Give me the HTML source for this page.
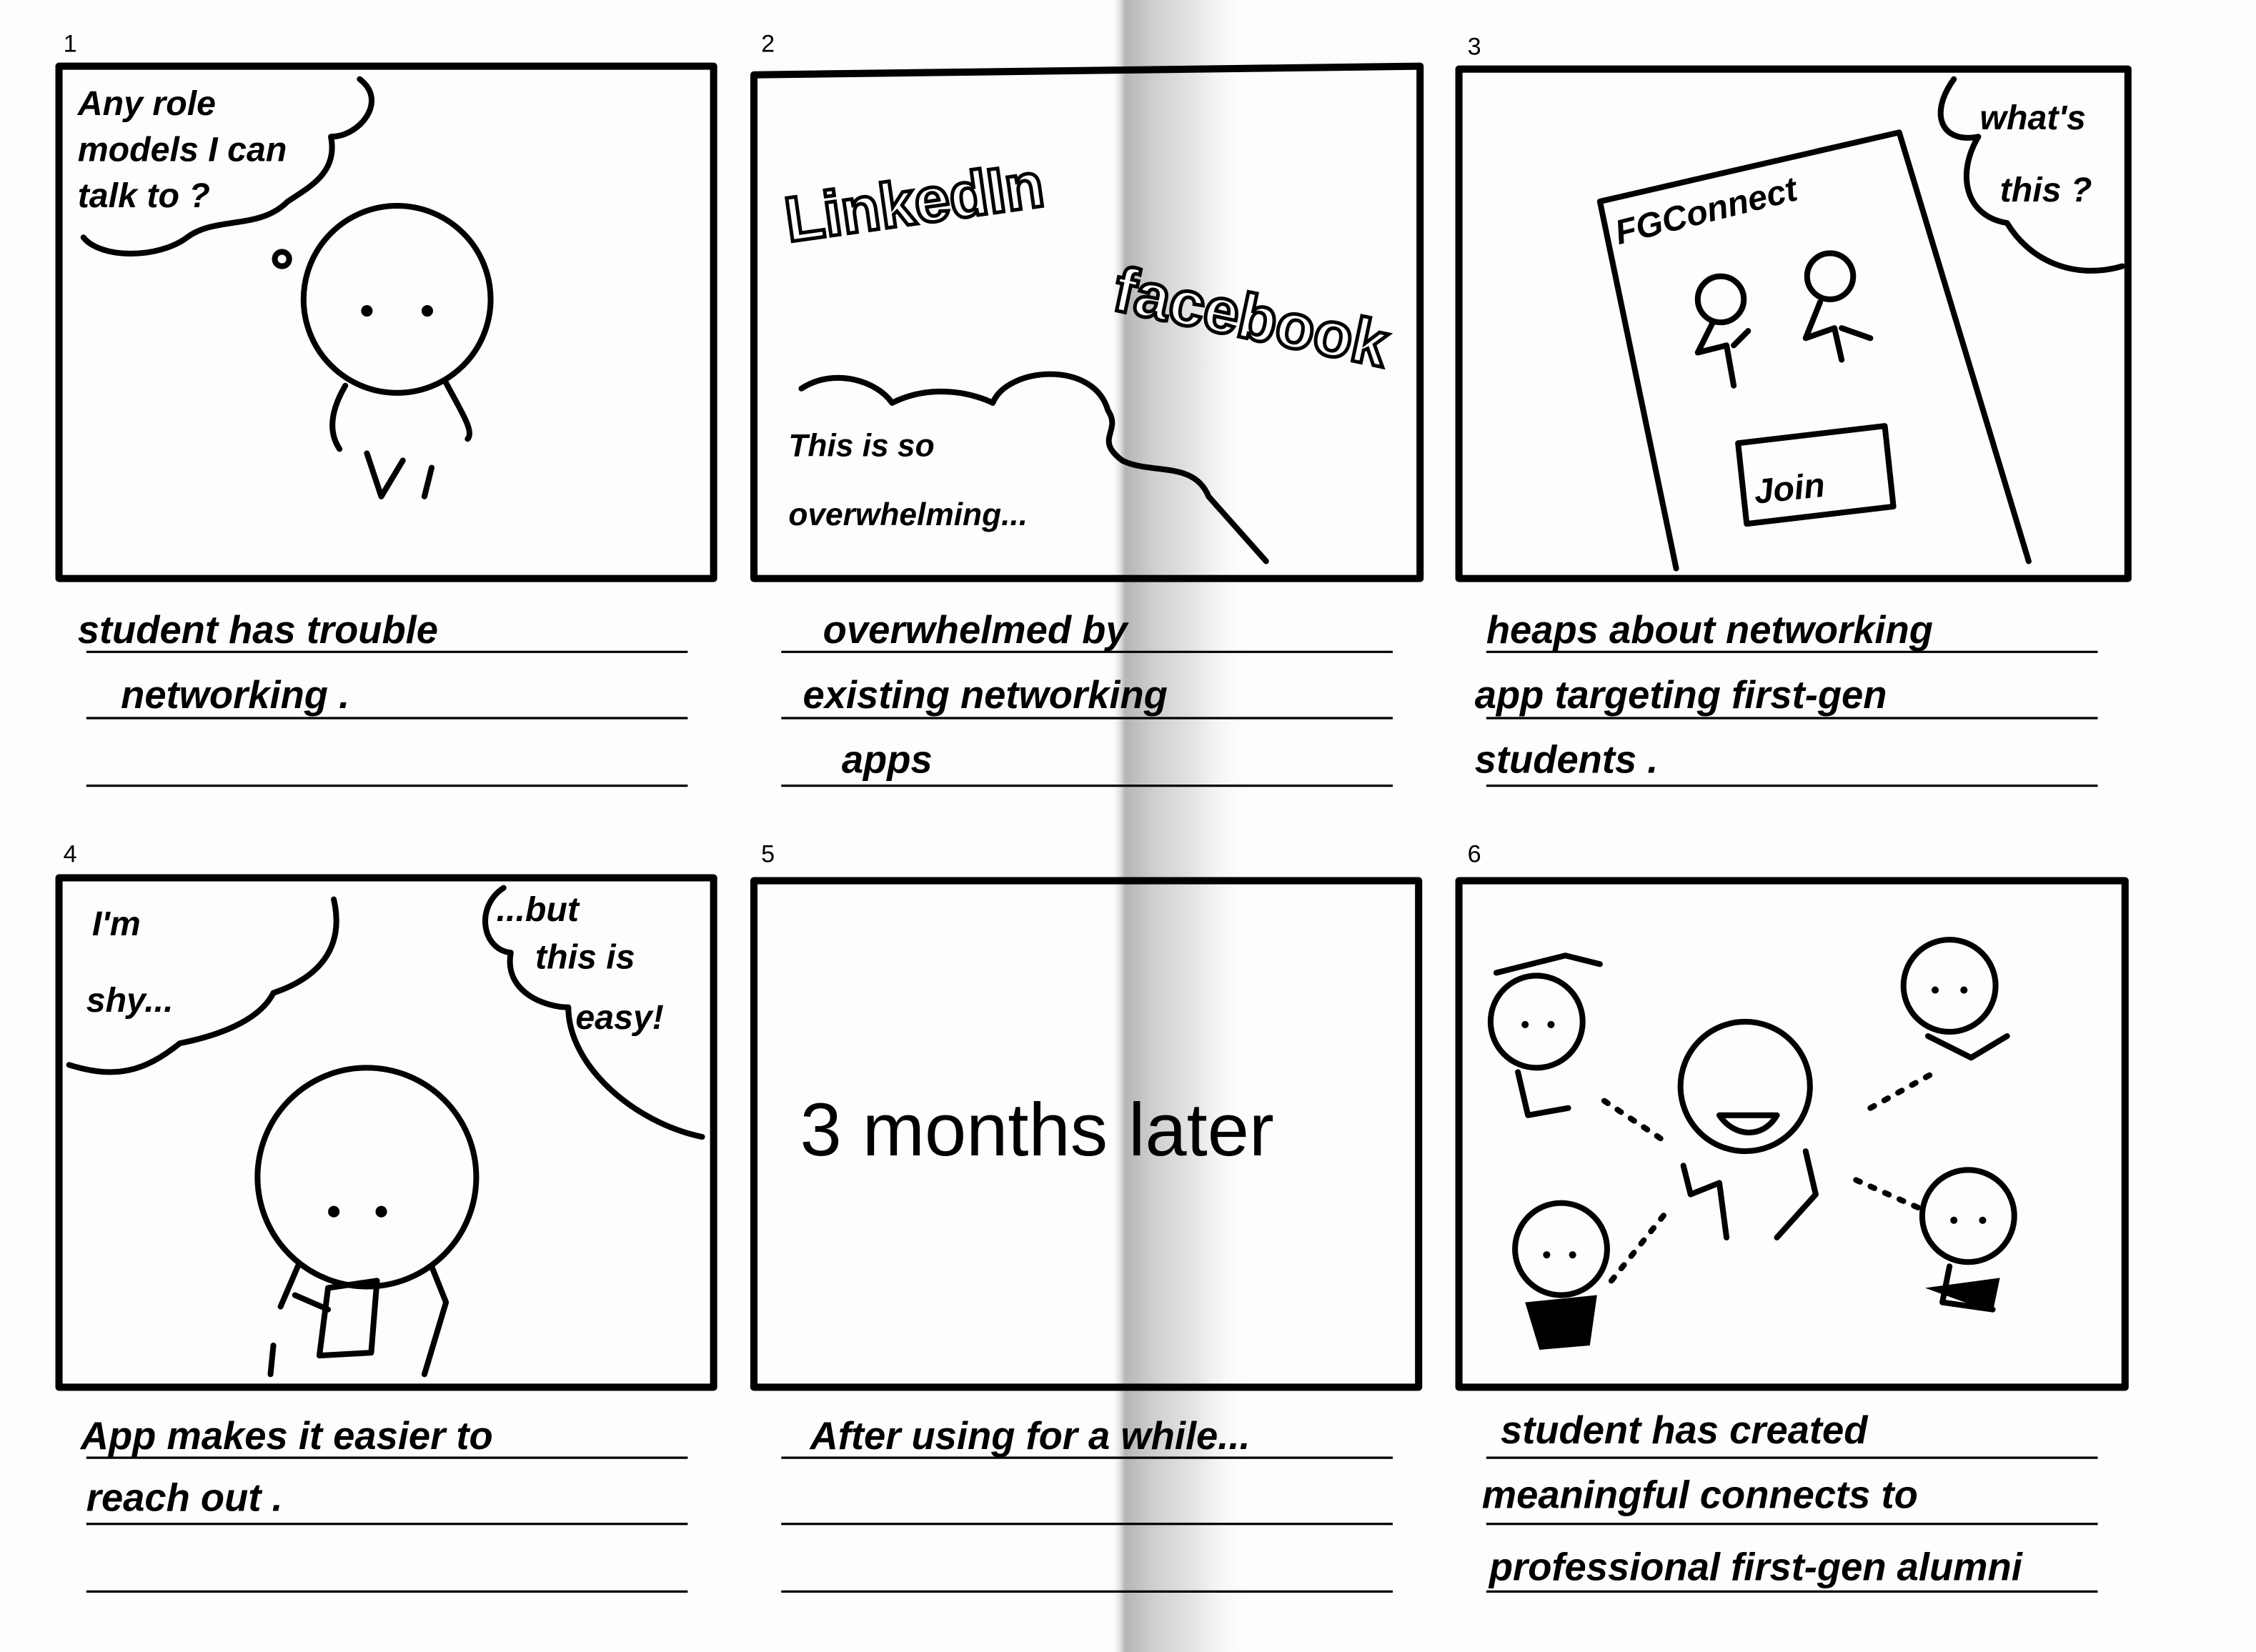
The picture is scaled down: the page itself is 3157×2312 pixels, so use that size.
<!DOCTYPE html>
<html><head><meta charset="utf-8"><style>
html,body{margin:0;padding:0;background:#fff;}
svg{display:block}
text{font-family:"Liberation Sans",sans-serif;fill:#000}
.h{font-family:"Liberation Sans",sans-serif;font-weight:bold}
.o{fill:#fff;stroke:#000;stroke-width:2.5}
</style></head><body>
<svg width="3157" height="2312" viewBox="0 0 1568 1148" preserveAspectRatio="none" xmlns="http://www.w3.org/2000/svg">
<defs>
<linearGradient id="fold" x1="0" x2="1" y1="0" y2="0">
<stop offset="0" stop-color="#fff" stop-opacity="0"/>
<stop offset="0.1" stop-color="#b5b5b5"/>
<stop offset="0.3" stop-color="#cfcfcf"/>
<stop offset="0.6" stop-color="#e6e6e6"/>
<stop offset="1" stop-color="#fff" stop-opacity="0"/>
</linearGradient>
</defs>
<rect width="1568" height="1148" fill="#fdfdfd"/>
<rect x="772" y="0" width="100" height="1148" fill="url(#fold)"/>
<g fill="none" stroke="#000" stroke-width="5" stroke-linejoin="round" stroke-linecap="round">
<rect x="41" y="46" width="455" height="356"/>
<path d="M524 52 L987 46 L987 402 L524 402 Z"/>
<rect x="1014" y="48" width="465" height="354"/>
<rect x="41" y="610" width="455" height="354"/>
<rect x="524" y="612" width="462" height="352"/>
<rect x="1014" y="612" width="463" height="352"/>
</g>
<g stroke="#000" stroke-width="1.6">
<line x1="60" y1="453" x2="478" y2="453"/><line x1="60" y1="499" x2="478" y2="499"/><line x1="60" y1="546" x2="478" y2="546"/>
<line x1="543" y1="453" x2="968" y2="453"/><line x1="543" y1="499" x2="968" y2="499"/><line x1="543" y1="546" x2="968" y2="546"/>
<line x1="1033" y1="453" x2="1458" y2="453"/><line x1="1033" y1="499" x2="1458" y2="499"/><line x1="1033" y1="546" x2="1458" y2="546"/>
<line x1="60" y1="1013" x2="478" y2="1013"/><line x1="60" y1="1059" x2="478" y2="1059"/><line x1="60" y1="1106" x2="478" y2="1106"/>
<line x1="543" y1="1013" x2="968" y2="1013"/><line x1="543" y1="1059" x2="968" y2="1059"/><line x1="543" y1="1106" x2="968" y2="1106"/>
<line x1="1033" y1="1013" x2="1458" y2="1013"/><line x1="1033" y1="1059" x2="1458" y2="1059"/><line x1="1033" y1="1106" x2="1458" y2="1106"/>
</g>
<g font-size="17">
<text x="44" y="36">1</text><text x="529" y="36">2</text><text x="1020" y="38">3</text>
<text x="44" y="599">4</text><text x="529" y="599">5</text><text x="1020" y="599">6</text>
</g>
<g fill="none" stroke="#000" stroke-width="4" stroke-linecap="round" stroke-linejoin="round">
<path d="M250 55 C270 70 250 95 230 95 C235 120 215 130 200 140 C180 160 150 150 130 165 C110 180 70 180 58 165"/>
<circle cx="196" cy="180" r="5"/>
<circle cx="276" cy="208" r="65"/>
<path d="M240 268 C230 285 228 300 236 312 M310 266 C320 285 330 300 325 305 M255 315 L265 345 L280 320 M300 325 L295 345"/>
<path d="M557 270 C580 255 610 265 620 280 C650 265 680 275 690 280 C700 255 760 250 770 285 C780 300 760 305 780 320 C800 330 830 320 840 345 L880 390"/>
<path d="M1112 140 L1320 92 L1410 390 M1112 140 L1165 395"/>
<path d="M1358 55 C1340 80 1350 100 1375 95 C1360 120 1365 150 1395 155 C1410 180 1440 195 1475 185"/>
<circle cx="1196" cy="208" r="16"/><circle cx="1272" cy="192" r="16"/>
<path d="M1190 225 L1180 245 L1200 240 L1205 268 M1205 240 L1215 230 M1265 210 L1255 235 L1275 228 L1280 250 M1280 228 L1300 235"/>
<path d="M1208 308 L1310 296 L1316 352 L1214 364 Z"/>
<path d="M232 625 C240 660 220 680 190 690 C180 710 150 720 125 725 C100 745 80 750 48 740"/>
<path d="M350 617 C330 630 335 660 355 662 C350 690 380 700 395 700 C395 740 440 780 488 790"/>
<circle cx="255" cy="818" r="76"/>
<path d="M207 880 L195 908 M300 880 L310 905 L295 955 M190 935 L188 955 M228 895 L262 890 L258 940 L222 942 Z M205 900 L228 910"/>
<circle cx="1068" cy="710" r="32"/><circle cx="1213" cy="755" r="45"/><circle cx="1355" cy="685" r="32"/>
<circle cx="1085" cy="868" r="32"/><circle cx="1368" cy="845" r="32"/>
<path d="M1040 676 L1088 664 L1112 670 M1170 810 L1175 830 L1195 822 L1200 860 M1255 800 L1262 830 L1235 860 M1055 745 L1062 775 L1090 770 M1340 720 L1370 735 L1395 720 M1355 880 L1350 905 L1385 910"/>
<path d="M1195 775 C1205 790 1225 792 1235 775 Z"/>
<path d="M1115 765 L1160 795 M1120 890 L1160 840 M1300 770 L1345 745 M1290 820 L1335 840" stroke-dasharray="3 8"/>
</g>
<path d="M1060 905 L1110 900 L1105 935 L1070 938 Z M1338 895 L1390 888 L1385 912 Z" fill="#000"/>
<g fill="#000">
<circle cx="255" cy="216" r="4"/><circle cx="297" cy="216" r="4"/>
<circle cx="232" cy="842" r="4"/><circle cx="265" cy="842" r="4"/>
<circle cx="1060" cy="712" r="2.5"/><circle cx="1078" cy="712" r="2.5"/>
<circle cx="1345" cy="688" r="2.5"/><circle cx="1365" cy="688" r="2.5"/>
<circle cx="1075" cy="872" r="2.5"/><circle cx="1093" cy="872" r="2.5"/>
<circle cx="1358" cy="848" r="2.5"/><circle cx="1378" cy="848" r="2.5"/>
</g>
<g class="h" font-size="24" font-style="italic">
<text x="54" y="80">Any role</text>
<text x="54" y="112">models I can</text>
<text x="54" y="144">talk to ?</text>
<text x="548" y="317" font-size="22">This is so</text>
<text x="548" y="365" font-size="22">overwhelming...</text>
<text x="1125" y="170" transform="rotate(-14 1125 170)">FGConnect</text>
<text x="1220" y="350" transform="rotate(-6 1220 350)">Join</text>
<text x="1376" y="90">what's</text>
<text x="1390" y="140">this ?</text>
<text x="64" y="650">I'm</text><text x="60" y="703">shy...</text>
<text x="345" y="640">...but</text><text x="372" y="673">this is</text><text x="400" y="715">easy!</text>
</g>
<text class="o" x="548" y="168" font-size="44" font-weight="bold" transform="rotate(-8 548 168)">LinkedIn</text>
<text class="o" x="772" y="215" font-size="44" font-weight="bold" transform="rotate(12 772 215)">facebook</text>
<text x="556" y="803" font-size="52">3 months later</text>
<g class="h" font-size="27" font-style="italic">
<text x="54" y="447">student has trouble</text>
<text x="84" y="492">networking .</text>
<text x="572" y="447">overwhelmed by</text>
<text x="558" y="492">existing networking</text>
<text x="585" y="537">apps</text>
<text x="1033" y="447">heaps about networking</text>
<text x="1025" y="492">app targeting first-gen</text>
<text x="1025" y="537">students .</text>
<text x="56" y="1007">App makes it easier to</text>
<text x="60" y="1050">reach out .</text>
<text x="563" y="1007">After using for a while...</text>
<text x="1043" y="1003">student has created</text>
<text x="1030" y="1048">meaningful connects to</text>
<text x="1035" y="1098">professional first-gen alumni</text>
</g>
</svg>
</body></html>
